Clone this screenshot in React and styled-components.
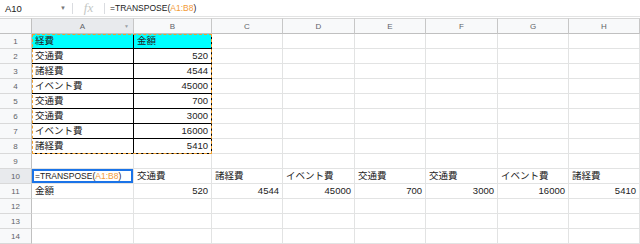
import styled, { createGlobalStyle } from "styled-components";

const GlobalStyle = createGlobalStyle`
body{
  margin:0;
  background:#fff;
  font-family:"Liberation Sans","Noto Sans CJK JP",Arial,sans-serif;
}
`

const Page = styled.div`
width:640px;
height:244px;
overflow:hidden;
`

const FormulaBar = styled.div`
display:flex;
align-items:center;
height:16px;
border-bottom:1px solid #e2e3e3;
box-sizing:content-box;
`

const NameBox = styled.div`
width:72px;
display:flex;
align-items:center;
justify-content:space-between;
padding:0 6px 0 5px;
box-sizing:border-box;
font-size:9.5px;
color:#222;
`

const Caret = styled.span`
font-size:6px;
color:#777;
`

const Divider = styled.div`
width:1px;
height:11px;
background:#dadce0;
`

const Fx = styled.div`
width:31px;
text-align:center;
font-family:"Liberation Serif",serif;
font-style:italic;
font-size:13px;
color:#c4c7c5;
`

const FormulaText = styled.div`
padding-left:5px;
font-size:8.5px;
color:#222;
`

const Ref = styled.span`
color:#f29b38;
`

const Grid = styled.div`
position:relative;
margin-top:1px;
display:grid;
grid-template-columns:32px 102px 78px 71px 72px 71px 72px 71px 71px;
grid-auto-rows:15px;
grid-template-rows:16px;
`

const Corner = styled.div`
background:#f8f9fa;
border-right:1px solid #c0c0c0;
border-bottom:1px solid #c0c0c0;
border-top:1px solid #d6d6d6;
box-sizing:border-box;
`

const ColHead = styled.div`
position:relative;
display:flex;
align-items:center;
justify-content:center;
background:${p => p.$active ? "#e8eaed" : "#f8f9fa"};
border-right:1px solid #c7c7c7;
border-bottom:1px solid #c0c0c0;
border-top:1px solid #d6d6d6;
box-sizing:border-box;
font-size:8px;
color:#5f6368;
`

const HeadCaret = styled.span`
position:absolute;
right:4px;
top:4px;
font-size:5px;
color:#9aa0a6;
`

const RowHead = styled.div`
display:flex;
align-items:center;
justify-content:center;
background:${p => p.$active ? "#e8eaed" : "#f8f9fa"};
border-right:1px solid #c0c0c0;
border-bottom:1px solid #d9d9d9;
box-sizing:border-box;
font-size:8px;
color:#5f6368;
`

const Cell = styled.div`
display:flex;
align-items:flex-end;
justify-content:${p => p.$num ? "flex-end" : "flex-start"};
padding:0 3px 1px 3px;
background:${p => p.$fill || "#fff"};
border-right:1px solid ${p => p.$boxed ? "#000" : "#e2e3e3"};
border-bottom:1px solid ${p => p.$boxed ? "#000" : "#e2e3e3"};
box-shadow:${p => p.$selected ? "inset 0 0 0 2px #1a73e8" : "none"};
box-sizing:border-box;
font-size:${p => p.$editing ? "8.5px" : "9.5px"};
line-height:12px;
color:#222;
white-space:nowrap;
overflow:visible;
`

const Marquee = styled.div`
position:absolute;
left:32px;
top:16px;
width:180px;
height:120px;
border:1px dashed #f0a030;
box-sizing:border-box;
pointer-events:none;
`

const cols = ["A", "B", "C", "D", "E", "F", "G", "H"];

const source = [
  ["経費", "金額"],
  ["交通費", 520],
  ["諸経費", 4544],
  ["イベント費", 45000],
  ["交通費", 700],
  ["交通費", 3000],
  ["イベント費", 16000],
  ["諸経費", 5410],
];

function rowValues(r) {
  if (r <= 8) return [...source[r - 1], ...Array(6).fill("")];
  if (r === 10) return ["=", ...source.slice(1).map(s => s[0])];
  if (r === 11) return ["金額", ...source.slice(1).map(s => s[1])];
  return Array(8).fill("");
}

export default function App() {
  const rows = Array.from({ length: 14 }, (_, i) => i + 1);

  return (
    <Page>
      <GlobalStyle />
      <FormulaBar>
        <NameBox>A10 <Caret>▼</Caret></NameBox>
        <Divider />
        <Fx>fx</Fx>
        <Divider />
        <FormulaText>=TRANSPOSE(<Ref>A1:B8</Ref>)</FormulaText>
      </FormulaBar>

      <Grid>
        <Corner />
        {cols.map(c => (
          <ColHead key={c} $active={c === "A"}>
            {c}
            {c === "A" && <HeadCaret>▼</HeadCaret>}
          </ColHead>
        ))}

        {rows.map(r => {
          const vals = rowValues(r);
          return [
            <RowHead key={"h" + r} $active={r === 10}>{r}</RowHead>,
            ...vals.map((v, i) => {
              const boxed = r <= 8 && i < 2;
              const selected = r === 10 && i === 0;
              return (
                <Cell
                  key={r + "-" + i}
                  $num={typeof v === "number"}
                  $boxed={boxed}
                  $fill={r === 1 && i < 2 ? "#00ffff" : null}
                  $selected={selected}
                  $editing={selected}
                >
                  {selected ? <span>=TRANSPOSE(<Ref>A1:B8</Ref>)</span> : v}
                </Cell>
              );
            }),
          ];
        })}

        <Marquee />
      </Grid>
    </Page>
  );
}
